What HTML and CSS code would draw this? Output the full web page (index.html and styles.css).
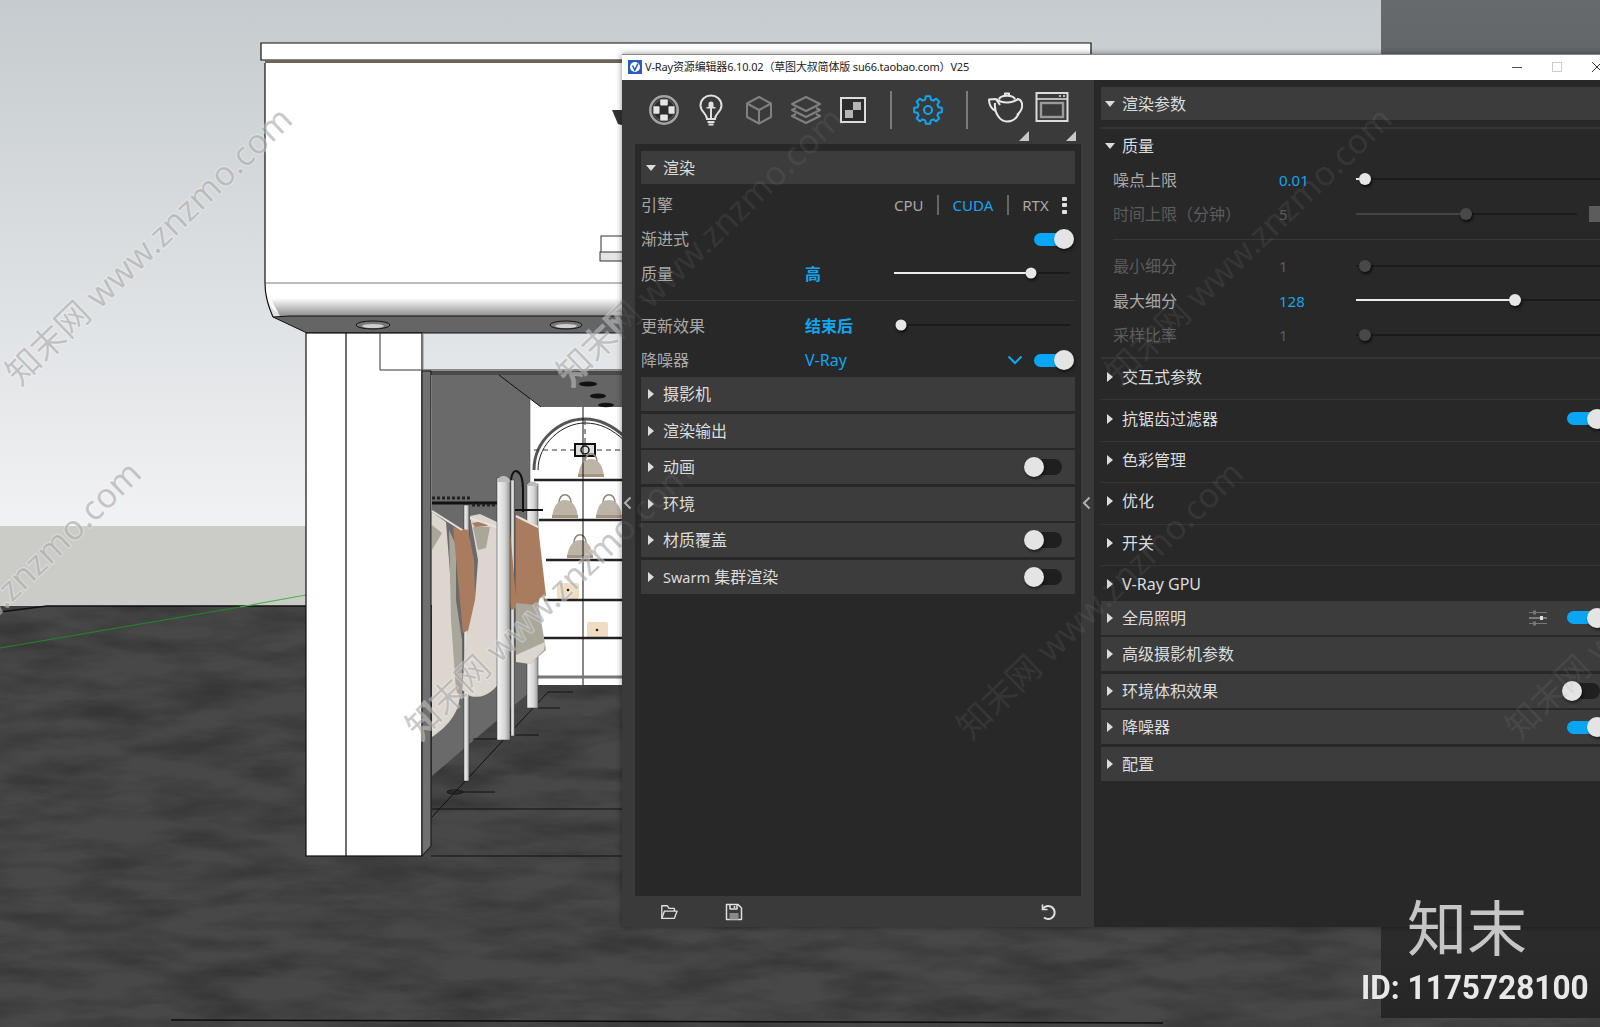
FILE: index.html
```html
<!DOCTYPE html>
<html lang="zh-CN">

<head>
    <meta charset="UTF-8">
    <title>V-Ray资源编辑器</title>
    <link rel="stylesheet" href="styles.css">
</head>

<body>
    <!-- SketchUp viewport behind the editor window -->
    <svg class="scene" viewBox="0 0 1600 1027" xmlns="http://www.w3.org/2000/svg">
        <defs>
            <linearGradient id="sky" x1="0" y1="0" x2="0" y2="1">
                <stop offset="0" stop-color="#c5cbce" />
                <stop offset="1" stop-color="#f1f2f4" />
            </linearGradient>
            <linearGradient id="stampBg" x1="0" y1="0" x2="0" y2="1">
                <stop offset="0" stop-color="#676a6c" />
                <stop offset="1" stop-color="#262626" />
            </linearGradient>
            <linearGradient id="soffit" x1="0" y1="0" x2="0" y2="1">
                <stop offset="0" stop-color="#ffffff" />
                <stop offset="1" stop-color="#8f8f8f" />
            </linearGradient>
            <linearGradient id="pole" x1="0" y1="0" x2="1" y2="0">
                <stop offset="0" stop-color="#f4f4f4" />
                <stop offset=".6" stop-color="#d6d6d6" />
                <stop offset="1" stop-color="#9a9a9a" />
            </linearGradient>
            <filter id="grain" x="0" y="0" width="100%" height="100%" color-interpolation-filters="sRGB">
                <feTurbulence type="fractalNoise" baseFrequency=".012 .05" numOctaves="5" seed="7" />
                <feColorMatrix values="0 0 0 0 .1  0 0 0 0 .1  0 0 0 0 .1  .8 0 0 0 -.28" />
            </filter>
            <symbol id="bag" viewBox="0 0 30 30">
                <path d="M9 14C9 3 21 3 21 14" fill="none" stroke="#8f8578" stroke-width="1.6" />
                <path d="M2 29C3 17 8 11 15 11S27 17 28 29Z" fill="#bdb3a6" />
                <path d="M2 26H28V29H2Z" fill="#a5947f" />
            </symbol>
        </defs>

        <rect width="1600" height="527" fill="url(#sky)" />
        <rect y="526" width="1600" height="80" fill="#cbccc7" />
        <path d="M0 612L47 606H1600V1027H0Z" fill="#484848" />
        <path d="M0 612L47 606H1600V1027H0Z" fill="#000" filter="url(#grain)" />
        <path d="M0 612L47 606H621" fill="none" stroke="#111" stroke-width="1.5" />
        <path d="M0 648L240 607" stroke="#1f8a1f" stroke-width="1.2" />
        <path d="M240 607L306 595" stroke="#4fb64f" stroke-width="1.2" />
        <path d="M171 1020L1163 1023" stroke="#0c0c0c" stroke-width="1.5" />

        <!-- upper box -->
        <path d="M261 43H1091V60H261Z" fill="#fff" stroke="#111" stroke-width="1.2" />
        <path d="M265 60H1000V63H265Z" fill="#6e6558" />
        <path d="M265 63H800V316H290C272 316 265 300 265 283Z" fill="#fff" />
        <path d="M270 298H800V316H280Z" fill="url(#soffit)" />
        <path d="M265 63V283C265 300 270 310 273 317" fill="none" stroke="#111" stroke-width="1.2" />
        <path d="M265 283H800" stroke="#555" stroke-width=".8" />
        <path d="M273 317L307 333H800V316H290Z" fill="#656565" stroke="#111" stroke-width="1" />
        <ellipse cx="373" cy="325" rx="17" ry="4" fill="#777" stroke="#111" />
        <ellipse cx="373" cy="326" rx="11" ry="2" fill="#cfcfcf" />
        <ellipse cx="566" cy="325" rx="16" ry="4" fill="#777" stroke="#111" />
        <ellipse cx="566" cy="326" rx="11" ry="2" fill="#cfcfcf" />
        <path d="M612 110L625 110V126L618 124Z" fill="#333" />
        <rect x="601" y="236" width="24" height="17" fill="#fff" stroke="#333" />
        <rect x="600" y="252" width="25" height="9" fill="#e4e4e4" stroke="#333" />

        <!-- column and beam -->
        <rect x="306" y="333" width="116" height="523" fill="#fff" stroke="#111" stroke-width="1.2" />
        <path d="M346 333V856" stroke="#111" stroke-width="1.2" />
        <path d="M380 333V370H800" fill="none" stroke="#333" stroke-width="1" />
        <path d="M423 333V370" stroke="#888" stroke-width="1" />
        <rect x="423" y="371" width="380" height="4" fill="#4a4a4a" />
        <path d="M422 371H431V846L422 856Z" fill="#707070" stroke="#111" stroke-width="1" />

        <!-- shop interior -->
        <path d="M432 375H530V692L432 776Z" fill="#6a6a6a" />
        <rect x="530" y="400" width="270" height="285" fill="#fff" />
        <path d="M499 375L541 407H800V375Z" fill="#656565" />
        <path d="M499 375L541 407" stroke="#111" stroke-width="1" />
        <path d="M530 400V685" stroke="#555" stroke-width=".6" />
        <ellipse cx="588" cy="384" rx="9" ry="2.5" fill="#111" />
        <ellipse cx="598" cy="396" rx="8" ry="2.5" fill="#111" />
        <ellipse cx="606" cy="405" rx="8" ry="2.2" fill="#111" />
        <path d="M534 470C534 440 560 419 585 419C600 419 612 425 625 437" fill="none" stroke="#555" stroke-width="3" />
        <path d="M538 470C538 444 562 423 585 423C600 423 612 429 625 441" fill="none" stroke="#222" stroke-width="1" />
        <path d="M534 450H625" stroke="#333" stroke-width="1" stroke-dasharray="5 4" />
        <path d="M585 420V470" stroke="#333" stroke-width="1" stroke-dasharray="5 4" />
        <rect x="575" y="444" width="20" height="12" fill="#ddd" stroke="#111" stroke-width="2" />
        <circle cx="585" cy="450" r="4" fill="none" stroke="#111" stroke-width="1.5" />
        <use href="#bag" x="576" y="448" width="30" height="30" />
        <use href="#bag" x="550" y="489" width="30" height="30" />
        <use href="#bag" x="594" y="489" width="30" height="30" />
        <use href="#bag" x="565" y="529" width="30" height="30" />
        <rect x="557" y="583" width="22" height="16" rx="2" fill="#f0dcc2" />
        <rect x="587" y="622" width="21" height="16" rx="2" fill="#f0dcc2" />
        <circle cx="568" cy="590" r="1.3" fill="#222" />
        <circle cx="597" cy="630" r="1.3" fill="#222" />
        <g stroke="#222" stroke-width="2.4">
            <path d="M534 480H625" />
            <path d="M539 520H625" />
            <path d="M546 560H625" />
            <path d="M544 600H625" />
            <path d="M544 638H625" />
        </g>
        <path d="M583 407V685" stroke="#111" stroke-width="1" />
        <path d="M534 677H625" stroke="#777" stroke-width="3" />

        <!-- floor marks -->
        <g fill="none" stroke="#111" stroke-width="1">
            <path d="M432 817L548 692H573" />
            <path d="M432 809H800" />
            <path d="M431 856H800" />
            <path d="M447 792H495" />
            <ellipse cx="455" cy="792" rx="8" ry="2" />
            <path d="M473 739H497" />
            <path d="M515 735H539" />
            <path d="M538 708H560" />
        </g>

        <!-- rails and clothes -->
        <path d="M511 480C512 466 523 468 523 490V512" fill="none" stroke="#111" stroke-width="2" />
        <rect x="527" y="484" width="11" height="224" fill="url(#pole)" stroke="#333" stroke-width=".5" />
        <path d="M527 486C528 480 537 480 538 486Z" fill="#bbb" />
        <rect x="511" y="480" width="3.5" height="256" fill="url(#pole)" stroke="#333" stroke-width=".5" />
        <path d="M432 503H503" stroke="#111" stroke-width="3" />
        <path d="M432 498H470M472 505H503" stroke="#222" stroke-width="3" stroke-dasharray="3 2" />
        <path d="M515 510H543" stroke="#111" stroke-width="2" />
        <rect x="464" y="505" width="5" height="276" fill="url(#pole)" stroke="#333" stroke-width=".5" />

        <path d="M432 512L446 522L449 560L455 640L460 690C461 710 450 725 432 737Z" fill="#dcd6cf" />
        <path d="M432 525L442 533L432 550Z" fill="#a9a69a" />
        <path d="M449 530L456 545V600L462 640V700L456 690L451 620Z" fill="#a9a69a" />
        <path d="M453 527L468 530L474 560L476 626L463 633L459 590Z" fill="#a97c60" />
        <path d="M432 511L462 530" stroke="#e8e2da" stroke-width="2" />
        <path d="M470 516L480 514L497 522L500 560L505 640L506 670C498 690 485 700 470 696L462 690L466 640L475 600L478 560Z" fill="#dcd6cf" />
        <path d="M473 527L490 527L486 548L478 550Z" fill="#a9a69a" />
        <path d="M497 535L503 540L506 660L502 662Z" fill="#a9a69a" />
        <path d="M472 523L483 521L488 526L475 527Z" fill="#a97c60" />
        <path d="M497 520L510 530L517 608L511 610L506 570L497 540Z" fill="#a97c60" />
        <path d="M470 518L506 530" stroke="#e8e2da" stroke-width="2" />
        <rect x="497" y="478" width="13" height="262" fill="url(#pole)" stroke="#333" stroke-width=".5" />
        <path d="M497 482C498 474 509 474 510 482Z" fill="#bbb" />
        <path d="M516 602H538L546 650L530 664L516 660Z" fill="#a9a69a" />
        <path d="M516 655L545 642L544 650L530 664L516 662Z" fill="#dcd6cf" />
        <path d="M516 517L538 526L546 596L540 598L537 605L516 603Z" fill="#a97c60" />
        <path d="M516 516L538 527" stroke="#e8e2da" stroke-width="2" />

        <rect x="1381" width="219" height="1018" fill="url(#stampBg)" />
    </svg>

    <div class="scene-marks">
        <span class="wm wm-1">知末网 www.znzmo.com</span>
        <span class="wm wm-2">知末网 www.znzmo.com</span>
        <span class="wm wm-4">知末网 www.znzmo.com</span>
        <span class="wm wm-5">知末网 www.znzmo.com</span>
    </div>

    <div class="window">
        <div class="title-bar">
            <svg class="vray-logo" viewBox="0 0 14 14">
                <rect width="14" height="14" fill="#2a5cbe" />
                <circle cx="7" cy="7" r="5" fill="#fff" />
                <path d="M4.5 5.5L6.8 10L10 3.5" fill="none" stroke="#2a5cbe" stroke-width="1.6" />
            </svg>
            <span class="title-text">V-Ray资源编辑器6.10.02（草图大叔简体版 su66.taobao.com）V25</span>
            <div class="win-buttons">
                <span class="win-btn"><svg width="10" height="10"><path d="M0 5.5H10" stroke="#555" /></svg></span>
                <span class="win-btn"><svg width="10" height="10"><rect x=".5" y=".5" width="9" height="9" fill="none" stroke="#ccc" /></svg></span>
                <span class="win-btn"><svg width="10" height="10"><path d="M0 0L10 10M10 0L0 10" stroke="#333" /></svg></span>
            </div>
        </div>

        <div class="window-body">
            <section class="left-side">
                <div class="toolbar">
                    <svg class="tool" viewBox="0 0 32 32">
                        <circle cx="16" cy="16" r="13.7" fill="#2e2e2e" stroke="#a4a4a4" stroke-width="2.6" />
                        <circle cx="16" cy="16" r="11" fill="none" stroke="#6a6a6a" stroke-width="1" />
                        <rect x="12.2" y="5.5" width="7.6" height="6" rx="1" fill="#e6e6e6" />
                        <rect x="12.2" y="20.5" width="7.6" height="6" rx="1" fill="#e6e6e6" />
                        <rect x="5.5" y="12.2" width="6" height="7.6" rx="1" fill="#e6e6e6" />
                        <rect x="20.5" y="12.2" width="6" height="7.6" rx="1" fill="#e6e6e6" />
                    </svg>
                    <svg class="tool" viewBox="0 0 32 32" fill="none" stroke="#e0e0e0" stroke-width="2">
                        <path d="M12 25C12 19 5.5 18 5.5 11.5C5.5 5.5 10.5 1.5 16 1.5S26.500 5.500 26.500 11.500C26.500 18 20 19 20 25Z" />
                        <path d="M12.500 28H19.500M13.500 30.500H18.500" />
                        <path d="M11.500 14.500H20.500V13H18.500V10A2.500 2.500 0 0 0 13.500 10V13H11.500Z" fill="#e0e0e0" stroke="none" />
                        <path d="M16 14V25" />
                    </svg>
                    <svg class="tool" viewBox="0 0 32 32" fill="none" stroke="#808080" stroke-width="2" stroke-linejoin="round">
                        <path d="M16 3L28 9.5V23L16 29.5L4 23V9.5Z" />
                        <path d="M4 9.5L16 16L28 9.5M16 16V29.5" />
                    </svg>
                    <svg class="tool" viewBox="0 0 32 32" fill="none" stroke="#808080" stroke-width="2" stroke-linejoin="round">
                        <path d="M16 3L30 10L16 17L2 10Z" />
                        <path d="M6 14L2 16L16 23L30 16L26 14" />
                        <path d="M6 20L2 22L16 29L30 22L26 20" />
                    </svg>
                    <svg class="tool" viewBox="0 0 32 32">
                        <rect x="4" y="4" width="24" height="24" fill="#2c2c2c" stroke="#dcdcdc" stroke-width="2" />
                        <rect x="16" y="8" width="8" height="8" fill="#b5b5b5" />
                        <rect x="8" y="16" width="8" height="8" fill="#b5b5b5" />
                    </svg>
                    <span class="tool-sep"></span>
                    <svg class="tool" viewBox="0 0 32 32" fill="none" stroke="#12a5f0" stroke-width="2" stroke-linejoin="round">
                        <polygon points="13.2,5.57 13.81,2.17 18.19,2.17 18.8,5.57 21.4,6.65 24.23,4.67 27.33,7.77 25.35,10.6 26.43,13.2 29.83,13.81 29.83,18.19 26.43,18.8 25.35,21.4 27.33,24.23 24.23,27.33 21.4,25.35 18.8,26.43 18.19,29.83 13.81,29.83 13.2,26.43 10.6,25.35 7.77,27.33 4.67,24.23 6.65,21.4 5.57,18.8 2.17,18.19 2.17,13.81 5.57,13.2 6.65,10.6 4.67,7.77 7.77,4.67 10.6,6.65" />
                        <circle cx="16" cy="16" r="4" />
                    </svg>
                    <span class="tool-sep second"></span>
                    <div class="tool-menu teapot">
                        <svg class="tool wide" viewBox="0 0 36 32" fill="none" stroke="#e8e8e8" stroke-width="2" stroke-linejoin="round">
                            <path d="M9 8C14 12.500 26 12.500 31 8" />
                            <path d="M12 8.500C13 3.500 27 3.500 28 8.500" />
                            <path d="M18 4.500V2.500H22V4.500" />
                            <path d="M8 12C7 22 13 30.500 20 30.500C26 30.500 30 27 32 22" />
                            <path d="M30 8C35 8 36 14 34.500 18C33.500 21 32 22 30 24" />
                            <path d="M9 8L2 8.500C2 14 5 18 8.500 20M9 8L13 14" />
                        </svg>
                    </div>
                    <div class="tool-menu dialog">
                        <svg class="tool wide" viewBox="0 0 36 32" fill="none">
                            <rect x="2.500" y="2" width="31" height="28" stroke="#dcdcdc" stroke-width="2" />
                            <path d="M2.500 8H33.500" stroke="#dcdcdc" stroke-width="1.600" />
                            <path d="M25 5H27M29 5H31" stroke="#c0c0c0" stroke-width="2" />
                            <rect x="7" y="12" width="22" height="14" stroke="#9a9a9a" stroke-width="2.400" />
                        </svg>
                    </div>
                </div>

                <div class="inner-panel">
                    <div class="header"><i class="arrow down"></i>渲染</div>
                    <div class="row first">
                        <span class="label">引擎</span>
                        <div class="engine-tabs">
                            <span>CPU</span><b class="tab-sep"></b><span class="blue">CUDA</span><b class="tab-sep"></b><span>RTX</span>
                            <span class="dots"><i></i><i></i><i></i></span>
                        </div>
                    </div>
                    <div class="row">
                        <span class="label">渐进式</span>
                        <span class="toggle on push"><i></i></span>
                    </div>
                    <div class="row">
                        <span class="label">质量</span>
                        <span class="value blue strong">高</span>
                        <div class="slider">
                            <div class="fill" style="width: 137px"></div>
                            <div class="knob" style="left: 137px"></div>
                        </div>
                    </div>
                    <div class="divider"></div>
                    <div class="row">
                        <span class="label">更新效果</span>
                        <span class="value blue strong">结束后</span>
                        <div class="slider">
                            <div class="knob" style="left: 7px"></div>
                        </div>
                    </div>
                    <div class="row">
                        <span class="label">降噪器</span>
                        <span class="value blue">V-Ray</span>
                        <svg class="chevron" width="16" height="10" viewBox="0 0 16 10"><path d="M1.5 1.5L8 8L14.5 1.5" fill="none" stroke="#12a5f0" stroke-width="2.2" /></svg>
                        <span class="toggle on"><i></i></span>
                    </div>

                    <div class="stack">
                        <div class="header"><i class="arrow"></i>摄影机</div>
                        <div class="header"><i class="arrow"></i>渲染输出</div>
                        <div class="header"><i class="arrow"></i>动画<span class="toggle off push"><i></i></span></div>
                        <div class="header"><i class="arrow"></i>环境</div>
                        <div class="header"><i class="arrow"></i>材质覆盖<span class="toggle off push"><i></i></span></div>
                        <div class="header"><i class="arrow"></i><span><span class="swarm">Swarm</span> 集群渲染</span><span class="toggle off push"><i></i></span></div>
                    </div>
                </div>

                <div class="footer">
                    <svg class="foot-icon" viewBox="0 0 20 18" fill="none" stroke="#e0e0e0" stroke-width="1.5" stroke-linejoin="round">
                        <path d="M2 16V2H8L10 5H16V8" />
                        <path d="M2 16L5 8H19L16 16Z" />
                    </svg>
                    <svg class="foot-icon" viewBox="0 0 18 18" fill="none" stroke="#e0e0e0" stroke-width="1.5" stroke-linejoin="round">
                        <path d="M1.5 1.5H13L16.5 5V16.5H1.5Z" />
                        <path d="M5 1.5V6H12V1.5M9.5 3V5" />
                        <rect x="4.5" y="10" width="9" height="6.5" fill="#8a8a8a" stroke="none" />
                    </svg>
                    <svg class="foot-icon undo" viewBox="0 0 18 18" fill="none" stroke="#e0e0e0" stroke-width="2">
                        <path d="M4 5.5A6.5 6.5 0 1 1 5 14.5" />
                        <path d="M3.5 1.5V6.5H8.5" stroke-width="1.6" />
                    </svg>
                </div>

                <svg class="collapse collapse-a" width="9" height="14" viewBox="0 0 9 14"><path d="M7.5 1.5L2 7L7.5 12.5" fill="none" stroke="#b0b0b0" stroke-width="2" /></svg>
                <svg class="collapse collapse-b" width="9" height="14" viewBox="0 0 9 14"><path d="M7.5 1.5L2 7L7.5 12.5" fill="none" stroke="#b0b0b0" stroke-width="2" /></svg>
            </section>

            <section class="right-side">
                <div class="header top"><i class="arrow down"></i>渲染参数</div>
                <div class="rule"></div>
                <div class="group-title"><i class="arrow down"></i>质量</div>
                <div class="param">
                    <span class="label">噪点上限</span>
                    <span class="value blue num">0.01</span>
                    <div class="slider">
                        <div class="fill" style="width: 3px"></div>
                        <div class="knob big" style="left: 9px"></div>
                    </div>
                </div>
                <div class="param dim">
                    <span class="label">时间上限（分钟）</span>
                    <span class="value num">5</span>
                    <div class="slider short">
                        <div class="fill" style="width: 110px"></div>
                        <div class="knob big" style="left: 110px"></div>
                    </div>
                    <span class="unit-box"></span>
                </div>
                <div class="divider sub"></div>
                <div class="param dim">
                    <span class="label">最小细分</span>
                    <span class="value num">1</span>
                    <div class="slider">
                        <div class="knob big" style="left: 9px"></div>
                    </div>
                </div>
                <div class="param">
                    <span class="label">最大细分</span>
                    <span class="value blue num">128</span>
                    <div class="slider">
                        <div class="fill" style="width: 159px"></div>
                        <div class="knob big" style="left: 159px"></div>
                    </div>
                </div>
                <div class="param dim">
                    <span class="label">采样比率</span>
                    <span class="value num">1</span>
                    <div class="slider">
                        <div class="knob big" style="left: 9px"></div>
                    </div>
                </div>
                <div class="rule before-folds"></div>

                <div class="fold"><i class="arrow"></i>交互式参数</div>
                <div class="fold"><i class="arrow"></i>抗锯齿过滤器<span class="toggle on push"><i></i></span></div>
                <div class="fold"><i class="arrow"></i>色彩管理</div>
                <div class="fold"><i class="arrow"></i>优化</div>
                <div class="fold"><i class="arrow"></i>开关</div>
                <div class="fold last"><i class="arrow"></i>V-Ray GPU</div>

                <div class="stack">
                    <div class="header">
                        <i class="arrow"></i>全局照明
                        <svg class="tune push" width="18" height="16" viewBox="0 0 18 16" stroke="#bdbdbd">
                            <path d="M0 2.5H18" stroke="#777" /><rect x="4" y="0.5" width="3" height="4" fill="#777" stroke="none" />
                            <path d="M0 8H18" /><rect x="11" y="6" width="3" height="4" fill="#ddd" stroke="none" />
                            <path d="M0 13.5H18" stroke="#777" /><rect x="4" y="11.5" width="3" height="4" fill="#777" stroke="none" />
                        </svg>
                        <span class="toggle on"><i></i></span>
                    </div>
                    <div class="header"><i class="arrow"></i>高级摄影机参数</div>
                    <div class="header"><i class="arrow"></i>环境体积效果<span class="toggle off push"><i></i></span></div>
                    <div class="header"><i class="arrow"></i>降噪器<span class="toggle on push"><i></i></span></div>
                    <div class="header"><i class="arrow"></i>配置</div>
                </div>
            </section>
        </div>

        <div class="window-marks">
            <span class="wm wm-2">知末网 www.znzmo.com</span>
            <span class="wm wm-3">知末网 www.znzmo.com</span>
            <span class="wm wm-5">知末网 www.znzmo.com</span>
            <span class="wm wm-6">知末网 www.znzmo.com</span>
            <span class="wm wm-7">知末网 www.znzmo.com</span>
        </div>
    </div>

    <div class="stamp">
        <div class="stamp-logo">知末</div>
        <div class="stamp-id">ID: 1175728100</div>
    </div>
</body>

</html>
```

FILE: styles.css
```css
* {
    box-sizing: border-box;
}

html,
body {
    margin: 0;
    height: 100%;
    overflow: hidden;
}

body {
    position: relative;
    width: 1600px;
    height: 1027px;
    font: 16px/24px "Noto Sans", "Noto Sans CJK SC", sans-serif;
    color: #a8a8a8;
    background: #434343;
}

.scene {
    position: absolute;
    left: 0;
    top: 0;
    width: 1600px;
    height: 1027px;
}

/* editor window, runs off the right edge of the desktop */
.window {
    position: absolute;
    left: 622px;
    top: 54px;
    width: 1000px;
    height: 873px;
    display: flex;
    flex-direction: column;
    box-shadow: 0 0 6px rgba(0, 0, 0, 0.45);
}

.title-bar {
    height: 26px;
    flex: none;
    display: flex;
    align-items: center;
    padding: 0 0 2px 6px;
    background: #fff;
    border-top: 1px solid #8a8a8a;
}

.vray-logo {
    width: 14px;
    height: 14px;
    margin-right: 3px;
}

.title-text {
    font-size: 11px;
    line-height: 16px;
    letter-spacing: -0.16px;
    color: #222;
    white-space: nowrap;
}

.win-buttons {
    margin-left: auto;
    margin-right: 5px;
    display: flex;
}

.win-btn {
    width: 40px;
    height: 24px;
    display: flex;
    align-items: center;
    justify-content: center;
}

.window-body {
    flex: 1;
    display: flex;
    min-height: 0;
}

.left-side {
    position: relative;
    width: 472px;
    flex: none;
    display: flex;
    flex-direction: column;
    background: #3a3a3a;
}

.right-side {
    flex: 1;
    padding: 7px 0 0 7px;
    background: #282828;
}

.toolbar {
    height: 64px;
    flex: none;
    display: flex;
    align-items: center;
    padding: 0 0 4px 26px;
}

.tool {
    width: 32px;
    height: 32px;
    margin-right: 15.3px;
    flex: none;
}

.tool.wide {
    width: 36px;
    margin-right: 0;
}

.tool-sep {
    width: 2px;
    height: 38px;
    background: #7c7c7c;
    margin: 0 20px 0 6px;
    flex: none;
}

.tool-sep.second {
    margin-right: 19.5px;
}

.tool-menu {
    position: relative;
    margin-right: 11px;
}

.tool-menu::after {
    content: "";
    position: absolute;
    right: -6px;
    bottom: -12px;
    border-style: solid;
    border-width: 0 0 10px 10px;
    border-color: transparent transparent #c8c8c8 transparent;
}

.tool-menu.dialog {
    margin-right: 0;
}

.inner-panel {
    flex: 1;
    margin: 0 13px;
    padding: 7px 6px 0;
    background: #282828;
}

.header {
    height: 33px;
    display: flex;
    align-items: center;
    padding-right: 0;
    color: #dcdcdc;
    background: #3c3c3c;
}

.stack {
    display: flex;
    flex-direction: column;
    gap: 2.5px;
}

.stack .header {
    height: 34px;
}

.swarm {
    font-size: 14.5px;
}

.arrow {
    width: 20px;
    margin-right: 2px;
    flex: none;
    display: flex;
    justify-content: center;
}

.arrow::before {
    content: "";
    border-style: solid;
    border-width: 5px 0 5px 6px;
    border-color: transparent transparent transparent #dcdcdc;
}

.arrow.down::before {
    border-width: 6px 5px 0;
    border-color: #dcdcdc transparent transparent;
}

.right-side .arrow {
    width: 18px;
    margin-right: 3px;
}

.row {
    height: 34.3px;
    display: grid;
    grid-template-columns: 164px 89px 1fr;
    align-items: center;
}

.row.first {
    margin-top: 4px;
}

.row .toggle,
.row .engine-tabs {
    grid-column: 3;
}

.row .toggle {
    justify-self: end;
}

.row .chevron {
    grid-column: 3;
    grid-row: 1;
    justify-self: end;
    margin-right: 52px;
}

.row .value + .chevron + .toggle {
    grid-row: 1;
}

.blue {
    color: #12a5f0;
}

.strong {
    font-weight: 700;
}

.num {
    font-size: 15px;
}

.engine-tabs {
    display: flex;
    align-items: center;
    justify-content: flex-end;
    padding-right: 9px;
    font-size: 15px;
}

.tab-sep {
    width: 2px;
    height: 20px;
    margin: 0 13.5px;
    background: #666;
}

.dots {
    display: flex;
    flex-direction: column;
    gap: 2.5px;
    margin-left: 13.5px;
}

.dots i {
    width: 5px;
    height: 4px;
    border-radius: 1px;
    background: #e0e0e0;
}

.toggle {
    position: relative;
    display: block;
    width: 40px;
    height: 20px;
    flex: none;
    margin-right: 1px;
}

.toggle::before {
    content: "";
    position: absolute;
    left: 0;
    top: 3.5px;
    width: 38px;
    height: 13px;
    border-radius: 7px;
    background: #0aa6f5;
}

.toggle i {
    position: absolute;
    right: 0;
    top: 0;
    width: 20px;
    height: 20px;
    border-radius: 50%;
    background: #e4e4e4;
    box-shadow: 1px 2px 3px rgba(0, 0, 0, 0.5);
}

.toggle.off {
    width: 38px;
    margin-right: 13px;
}

.toggle.off::before {
    background: #1f1f1f;
    height: 16px;
    top: 2px;
    border-radius: 8px;
}

.toggle.off i {
    right: auto;
    left: 0;
}

.push {
    margin-left: auto;
}

.right-side .toggle {
    margin-right: 15px;
}

.right-side .toggle.off {
    margin-right: 22px;
}

.slider {
    position: relative;
    height: 2px;
    background: #1b1b1b;
}

.fill {
    position: absolute;
    left: 0;
    top: 0;
    height: 100%;
    background: #ececec;
}

.knob {
    position: absolute;
    top: 50%;
    width: 11px;
    height: 11px;
    border-radius: 50%;
    transform: translate(-50%, -50%);
    background: #e6e6e6;
    box-shadow: 1px 2px 3px rgba(0, 0, 0, 0.7);
}

.knob.big {
    width: 12px;
    height: 12px;
}

.row .slider {
    width: 176px;
    margin-top: -2px;
}

.divider {
    height: 1px;
    margin: 9px 0 8px;
    background: #383838;
}

.divider.sub {
    margin: 7px 0 9.5px 12px;
}

.rule {
    height: 2px;
    background: #353535;
}

.header.top + .rule {
    margin-top: 7px;
}

.rule.before-folds {
    margin-top: 4.5px;
}

.group-title {
    height: 34px;
    display: flex;
    align-items: center;
    color: #dcdcdc;
    margin-top: -0.5px;
}

.param {
    position: relative;
    height: 34.5px;
    display: grid;
    grid-template-columns: 166px 77px 1fr;
    align-items: center;
    padding-left: 12px;
}

.param .slider {
    margin-top: -1px;
}

.param .slider.short {
    width: 221px;
}

.dim {
    color: #5c5c5c;
}

.dim .fill {
    background: #444;
}

.dim .knob {
    background: #484848;
}

.dim .value {
    color: #5c5c5c;
}

.unit-box {
    position: absolute;
    left: 488px;
    top: 9px;
    width: 16px;
    height: 16px;
    background: #5c5c5c;
}

.fold {
    height: 41.4px;
    display: flex;
    align-items: center;
    padding-bottom: 4px;
    color: #dcdcdc;
    border-bottom: 1px solid #353535;
}

.fold.last {
    height: 35px;
    padding: 1px 0 0;
    border-bottom: none;
}

.tune {
    margin-right: 20px;
}

.footer {
    height: 31px;
    flex: none;
    display: flex;
    align-items: center;
    padding: 0 37px 0 38px;
    gap: 47px;
}

.foot-icon {
    width: 18px;
    height: 18px;
}

.foot-icon.undo {
    margin-left: auto;
}

.collapse {
    position: absolute;
    top: 416px;
}

.collapse-a {
    left: 1px;
}

.collapse-b {
    left: 460px;
}

/* site stamp, bottom right */
.stamp {
    position: absolute;
    left: 1361px;
    top: 888px;
    width: 226px;
    color: #e8e8e8;
}

.stamp-logo {
    margin-left: 46px;
    font: 400 60px/74px "Noto Sans CJK SC", sans-serif;
    color: #c6c6c6;
}

.stamp-id {
    margin-top: 6px;
    font: 700 33px/40px Roboto, sans-serif;
    white-space: nowrap;
    transform: scaleX(0.957);
    transform-origin: left center;
}

/* watermark: one layer under the window, one clipped to it */
.scene-marks,
.window-marks {
    position: absolute;
    overflow: hidden;
    pointer-events: none;
}

.scene-marks {
    left: 0;
    top: 0;
    width: 1600px;
    height: 1027px;
}

.window-marks {
    left: -622px;
    top: -54px;
    width: 1600px;
    height: 1027px;
    clip-path: inset(80px 0 0 622px);
}

.wm {
    position: absolute;
    font: 34px/42px "Noto Sans", "Noto Sans CJK SC", sans-serif;
    white-space: nowrap;
    transform: translate(-50%, -50%) rotate(-44deg);
}

.scene-marks .wm {
    color: rgba(165, 165, 165, 0.6);
    -webkit-text-stroke: 2px rgba(255, 255, 255, 0.35);
    paint-order: stroke fill;
}

.window-marks .wm {
    color: rgba(150, 150, 150, 0.15);
}

.wm-1 { left: 148px; top: 245px; }
.wm-2 { left: 699px; top: 245px; }
.wm-3 { left: 1248px; top: 245px; }
.wm-4 { left: -3px; top: 599px; }
.wm-5 { left: 548px; top: 599px; }
.wm-6 { left: 1099px; top: 599px; }
.wm-7 { left: 1648px; top: 599px; }
```
